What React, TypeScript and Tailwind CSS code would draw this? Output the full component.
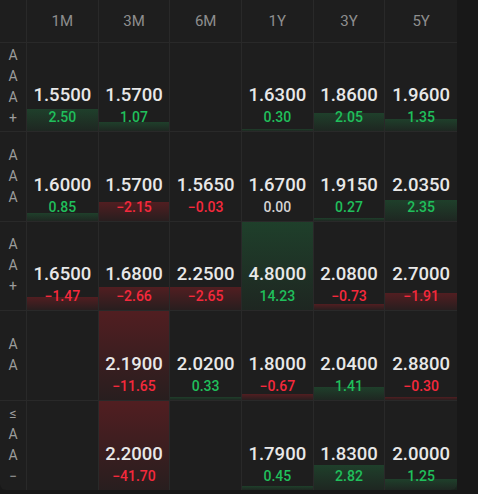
import React from 'react'

type Cell = { value: string; change: string } | null

const periods = ['1M', '3M', '6M', '1Y', '3Y', '5Y']

const rows: { label: string[]; cells: Cell[] }[] = [
  {
    label: ['A', 'A', 'A', '+'],
    cells: [
      { value: '1.5500', change: '2.50' },
      { value: '1.5700', change: '1.07' },
      null,
      { value: '1.6300', change: '0.30' },
      { value: '1.8600', change: '2.05' },
      { value: '1.9600', change: '1.35' }
    ]
  },
  {
    label: ['A', 'A', 'A'],
    cells: [
      { value: '1.6000', change: '0.85' },
      { value: '1.5700', change: '-2.15' },
      { value: '1.5650', change: '-0.03' },
      { value: '1.6700', change: '0.00' },
      { value: '1.9150', change: '0.27' },
      { value: '2.0350', change: '2.35' }
    ]
  },
  {
    label: ['A', 'A', '+'],
    cells: [
      { value: '1.6500', change: '-1.47' },
      { value: '1.6800', change: '-2.66' },
      { value: '2.2500', change: '-2.65' },
      { value: '4.8000', change: '14.23' },
      { value: '2.0800', change: '-0.73' },
      { value: '2.7000', change: '-1.91' }
    ]
  },
  {
    label: ['A', 'A'],
    cells: [
      null,
      { value: '2.1900', change: '-11.65' },
      { value: '2.0200', change: '0.33' },
      { value: '1.8000', change: '-0.67' },
      { value: '2.0400', change: '1.41' },
      { value: '2.8800', change: '-0.30' }
    ]
  },
  {
    label: ['≤', 'A', 'A', '−'],
    cells: [
      null,
      { value: '2.2000', change: '-41.70' },
      null,
      { value: '1.7900', change: '0.45' },
      { value: '1.8300', change: '2.82' },
      { value: '2.0000', change: '1.25' }
    ]
  }
]

const DataCell: React.FC<{ cell: Cell; last: boolean; lastRow: boolean }> = ({ cell, last, lastRow }) => {
  const border = `${last ? '' : 'border-r'} ${lastRow ? '' : 'border-b'} border-[#292929]`
  if (!cell) return <div className={`relative ${border}`} />

  const n = parseFloat(cell.change)
  const up = n > 0
  const down = n < 0
  const height = Math.min(100, Math.abs(n) * 10)
  const color = up ? 'text-[#20bf5b]' : down ? 'text-[#f5293c]' : 'text-[#d4d4d4]'

  return (
    <div className={`relative flex flex-col items-center justify-end pb-[4px] ${border}`}>
      {height > 0.5 && (
        <div
          className={`absolute bottom-0 left-0 right-0 ${
            up
              ? 'bg-gradient-to-b from-[rgba(34,197,94,0.2)] to-[rgba(34,197,94,0.05)]'
              : 'bg-gradient-to-b from-[rgba(200,30,40,0.3)] to-[rgba(200,30,40,0.06)]'
          }`}
          style={{ height: `${height}%` }}
        />
      )}
      <span className="relative text-[18.5px] leading-[24px] font-medium text-[#e8e8e8]">{cell.value}</span>
      <span className={`relative text-[14px] leading-[20px] font-medium ${color}`}>
        {cell.change.replace('-', '−')}
      </span>
    </div>
  )
}

export default function App() {
  return (
    <div className="w-[478px] h-[494px] bg-[#181818] font-['Roboto',sans-serif] overflow-hidden">
      <div className="w-[457px] h-[490px] bg-[#1e1e1e] rounded-b-[6px] grid grid-cols-[27px_repeat(6,minmax(0,1fr))] grid-rows-[43px_repeat(5,89.4px)]">
        <div className="border-r border-b border-[#292929]" />
        {periods.map((p, i) => (
          <div
            key={p}
            className={`flex items-center justify-center text-[15px] text-[#8e8e8e] border-b border-[#292929] ${
              i < periods.length - 1 ? 'border-r' : ''
            }`}
          >
            {p}
          </div>
        ))}
        {rows.map((row, r) => (
          <React.Fragment key={r}>
            <div
              className={`flex flex-col items-center justify-center text-[14px] leading-[21px] text-[#9c9c9c] border-r border-[#292929] ${
                r < rows.length - 1 ? 'border-b' : ''
              }`}
            >
              {row.label.map((l, k) => (
                <span key={k}>{l}</span>
              ))}
            </div>
            {row.cells.map((c, i) => (
              <DataCell key={i} cell={c} last={i === row.cells.length - 1} lastRow={r === rows.length - 1} />
            ))}
          </React.Fragment>
        ))}
      </div>
    </div>
  )
}
